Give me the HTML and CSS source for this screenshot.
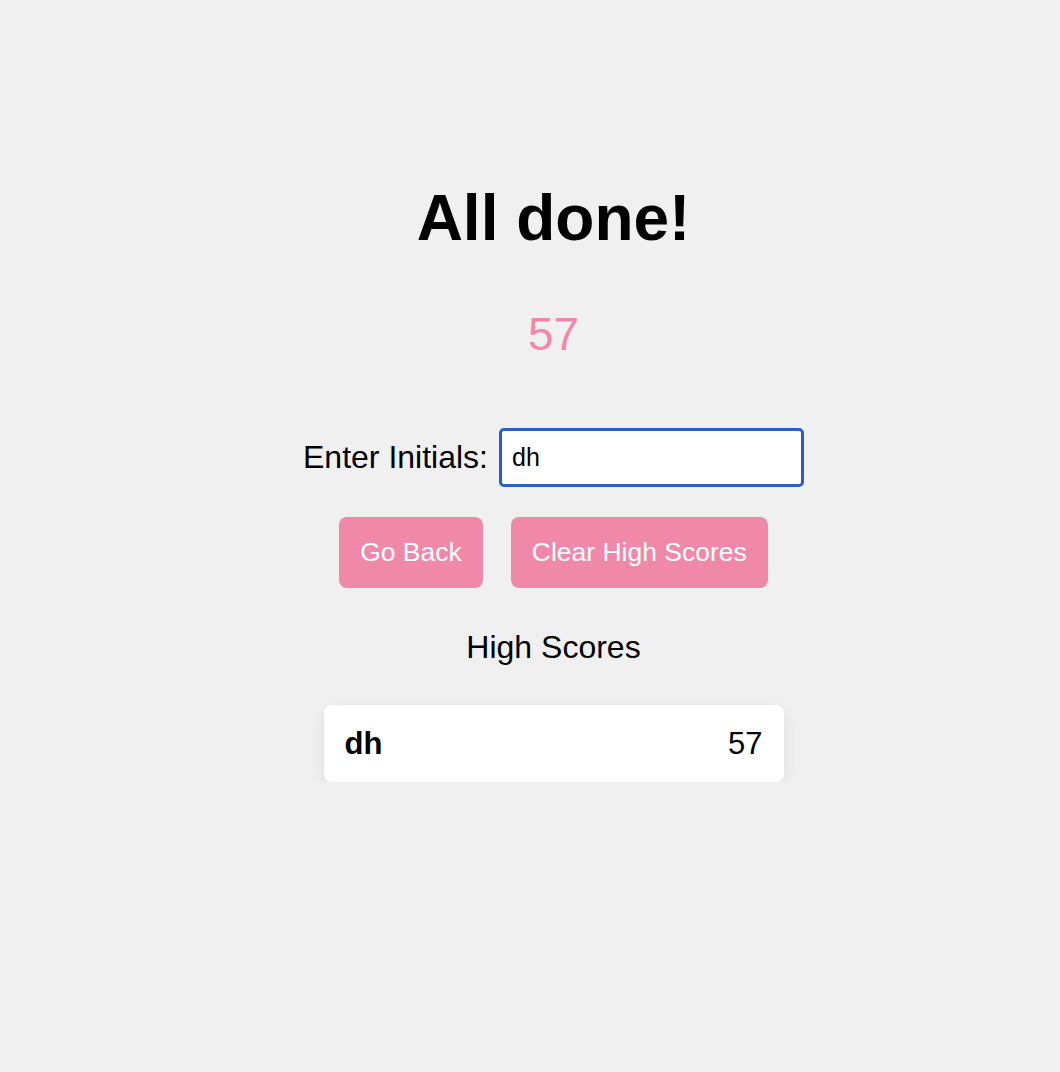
FILE: index.html
```html
<!DOCTYPE html>
<html lang="en">
<head>
<meta charset="utf-8">
<title>All done!</title>
<link rel="stylesheet" href="styles.css">
</head>
<body>
<main class="page">
  <h1 class="title">All done!</h1>
  <p class="score">57</p>
  <form class="initials">
    <label class="initials-label" for="initials">Enter Initials:</label>
    <input class="initials-input" id="initials" type="text" value="dh" autofocus>
  </form>
  <div class="actions">
    <button class="btn" type="button">Go Back</button>
    <button class="btn" type="button">Clear High Scores</button>
  </div>
  <h2 class="scores-title">High Scores</h2>
  <ul class="scores">
    <li class="score-row"><span class="score-name">dh</span><span class="score-value">57</span></li>
  </ul>
</main>
</body>
</html>
```

FILE: styles.css
```css
html, body {
  margin: 0;
  padding: 0;
  background: #f0f0f0;
}
body {
  font-family: "Liberation Sans", Arial, sans-serif;
  color: #000;
}
.page {
  display: flex;
  flex-direction: column;
  align-items: center;
  padding-top: 180px;
  padding-left: 47px;
}
.title {
  margin: 0;
  font-size: 64px;
  line-height: 76px;
  font-weight: 700;
}
.score {
  margin: 50px 0 0;
  font-size: 46px;
  line-height: 56px;
  color: #f088aa;
}
.initials {
  margin-top: 66px;
  display: flex;
  align-items: center;
  gap: 11px;
}
.initials-label {
  font-size: 32px;
}
.initials-input {
  box-sizing: border-box;
  width: 305px;
  height: 59px;
  border: 3px solid #2a5fc8;
  border-radius: 5px;
  outline: none;
  padding: 0 10px;
  font-family: "Liberation Sans", Arial, sans-serif;
  font-size: 25px;
  background: #fff;
  color: #000;
}
.actions {
  margin-top: 30px;
  display: flex;
  gap: 28px;
}
.btn {
  height: 71px;
  padding: 0 21px;
  border: none;
  border-radius: 8px;
  background: #f088aa;
  color: #fff;
  font-family: "Liberation Sans", Arial, sans-serif;
  font-size: 26.5px;
}
.scores-title {
  margin: 41px 0 0;
  font-size: 32px;
  font-weight: 400;
  line-height: 36px;
}
.scores {
  list-style: none;
  margin: 40px 0 0;
  padding: 0;
  width: 460px;
}
.score-row {
  display: flex;
  justify-content: space-between;
  align-items: center;
  height: 77px;
  padding: 0 21px;
  box-sizing: border-box;
  background: #fff;
  border-radius: 8px;
  box-shadow: 0 4px 14px rgba(0, 0, 0, 0.08);
  font-size: 31px;
}
.score-name {
  font-weight: 700;
}
```
